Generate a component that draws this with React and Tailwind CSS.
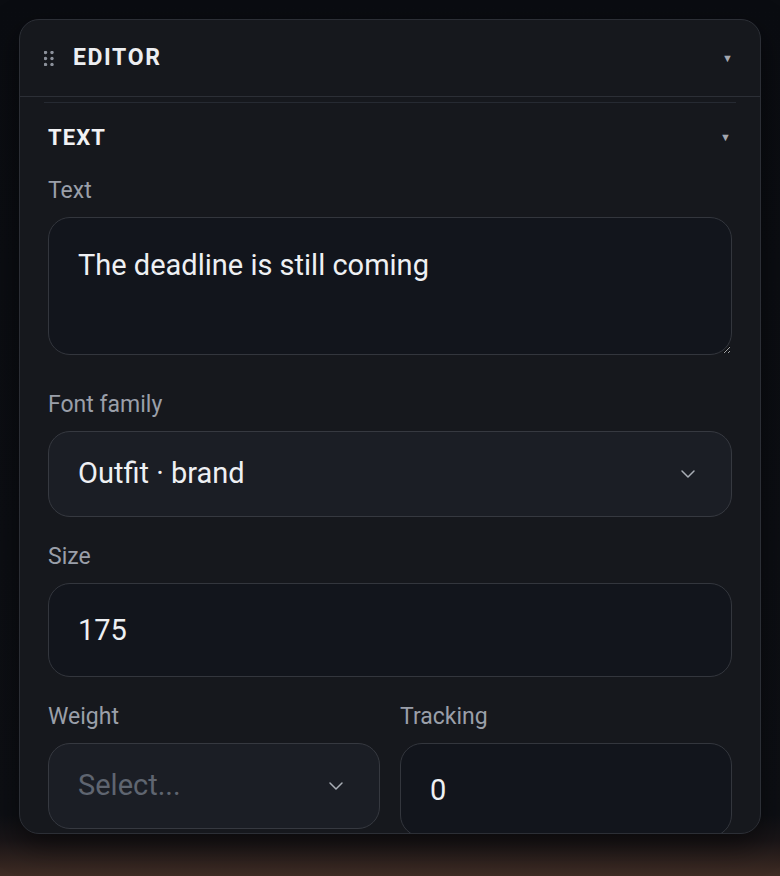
import React, { useState } from 'react';
import { ChevronDown } from 'lucide-react';

const font = { fontFamily: 'Roboto, "Noto Sans", sans-serif' };

const GripDots = () => (
  <svg width="10" height="15" viewBox="0 0 10 15" className="shrink-0">
    {[1.5, 7.5, 13.5].map((cy) =>
      [1.5, 8].map((cx) => <circle key={`${cx}-${cy}`} cx={cx} cy={cy} r="1.7" fill="#8b909a" />)
    )}
  </svg>
);

const Caret = () => <span className="text-[11px] leading-none text-[#a3a7b0]">▼</span>;

const Label = ({ children }) => (
  <div className="mb-[12px] pt-[1px] text-[23px] leading-[28px] text-[#9a9fa9]">{children}</div>
);

const SelectBox = ({ value, placeholder, className = '' }) => (
  <div
    className={`flex h-[86px] items-center justify-between rounded-[22px] border border-[#363940] bg-[#1b1e25] pl-[29px] pr-[31px] ${className}`}
  >
    <span className={`text-[29px] ${value ? 'text-[#eef0f3]' : 'text-[#5f6570]'}`}>{value || placeholder}</span>
    <ChevronDown size={24} strokeWidth={1.5} className="text-[#a9aeb6]" />
  </div>
);

const InputBox = ({ value, onChange }) => (
  <input
    value={value}
    onChange={(e) => onChange(e.target.value)}
    className="block h-[94px] w-full rounded-[22px] border border-[#33363d] bg-[#12151c] px-[29px] text-[29px] text-[#eef0f3] outline-none"
  />
);

export default function App() {
  const [text, setText] = useState('The deadline is still coming');
  const [size, setSize] = useState('175');
  const [tracking, setTracking] = useState('0');

  return (
    <div
      style={font}
      className="min-h-[876px] w-full bg-[linear-gradient(180deg,#0a0c11_0%,#0d0f14_93%,#1a1517_96%,#3f2c24_100%)] p-[19px] pb-0"
    >
      <div className="flex h-[815px] w-full flex-col overflow-hidden rounded-[20px] border border-[#2c2f36] bg-[#16181d] shadow-[0_10px_30px_rgba(0,0,0,0.5)]">
        {/* panel header */}
        <div className="flex h-[77px] shrink-0 items-center justify-between border-b border-[#2c2f36] pl-[24px] pr-[27px]">
          <div className="flex items-center gap-[19px]">
            <GripDots />
            <span className="text-[23px] font-bold tracking-[0.07em] text-[#eceef1]">EDITOR</span>
          </div>
          <Caret />
        </div>

        {/* scroll area */}
        <div className="flex-1 overflow-hidden px-[24px] pt-[5px]">
          <div className="border-t border-[#262a32] px-[4px]">
            <div className="flex h-[68px] items-center justify-between pr-[1px]">
              <span className="text-[22px] font-bold tracking-[0.05em] text-[#f1f2f4]">TEXT</span>
              <Caret />
            </div>

            <div className="pt-[5px]">
              <Label>Text</Label>
              <textarea
                value={text}
                onChange={(e) => setText(e.target.value)}
                className="mb-[35px] block h-[138px] w-full resize-y rounded-[22px] border border-[#33363d] bg-[#12151c] px-[29px] pt-[26px] text-[29px] leading-[1.5] text-[#eef0f3] outline-none"
              />

              <Label>Font family</Label>
              <SelectBox value="Outfit · brand" className="mb-[25px]" />

              <Label>Size</Label>
              <div className="mb-[25px]">
                <InputBox value={size} onChange={setSize} />
              </div>

              <div className="grid grid-cols-2 gap-[20px]">
                <div>
                  <Label>Weight</Label>
                  <SelectBox placeholder="Select..." />
                </div>
                <div>
                  <Label>Tracking</Label>
                  <InputBox value={tracking} onChange={setTracking} />
                </div>
              </div>
            </div>
          </div>
        </div>
      </div>
    </div>
  );
}
